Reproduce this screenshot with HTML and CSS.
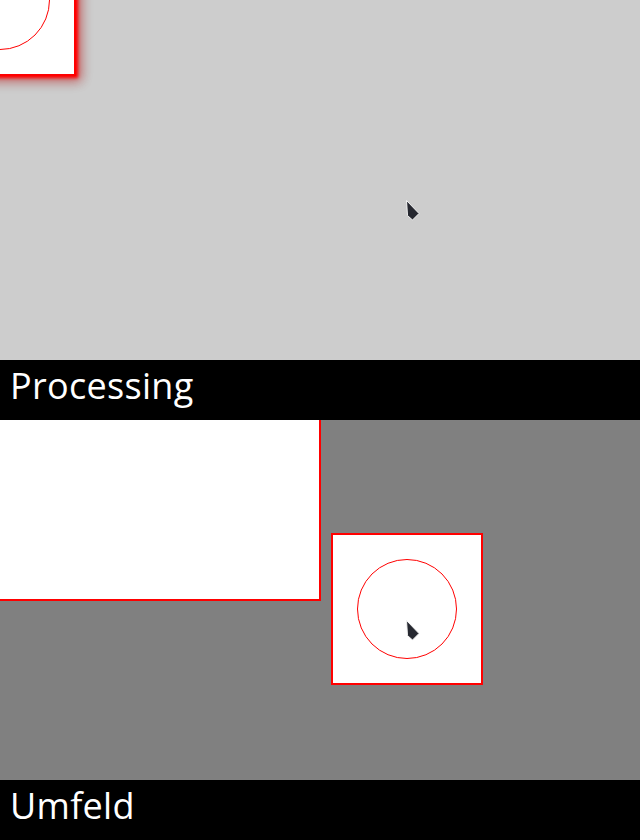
FILE: index.html
```html
<!DOCTYPE html>
<html>
<head>
<meta charset="utf-8">
<link rel="stylesheet" href="styles.css">
</head>
<body>
<section class="window">
  <div class="canvas canvas-light">
    <div class="square square-shadow square-corner">
      <div class="ring"></div>
    </div>
    <svg class="cursor cursor-top" width="18" height="26" viewBox="0 0 18 26">
      <polygon points="1.5,1.5 2.5,16.5 7.5,21 14,14.5" fill="#262830" stroke="#f4f4f4" stroke-width="1" stroke-linejoin="round"/>
    </svg>
  </div>
  <div class="label">Processing</div>
</section>
<section class="window">
  <div class="canvas canvas-dark">
    <div class="panel"></div>
    <div class="square square-mid">
      <div class="ring"></div>
    </div>
    <svg class="cursor cursor-bottom" width="18" height="26" viewBox="0 0 18 26">
      <polygon points="1.5,1.5 2.5,16.5 7.5,21 14,14.5" fill="#262830" stroke="#f4f4f4" stroke-width="1" stroke-linejoin="round"/>
    </svg>
  </div>
  <div class="label">Umfeld</div>
</section>
</body>
</html>
```
FILE: styles.css
```css
* { box-sizing: border-box; }
html, body {
  margin: 0;
  padding: 0;
  background: #000;
}
body {
  width: 640px;
  height: 840px;
  overflow: hidden;
  font-family: "Open Sans", "Noto Sans", sans-serif;
}
.window {
  display: flex;
  flex-direction: column;
}
.canvas {
  position: relative;
  height: 360px;
  overflow: hidden;
}
.canvas-light { background: #cdcdcd; }
.canvas-dark { background: #808080; }
.label {
  height: 60px;
  background: #000;
  color: #fff;
  font-size: 36px;
  letter-spacing: 0.3px;
  line-height: 52px;
  padding-left: 10px;
}
.square {
  position: absolute;
  width: 152px;
  height: 152px;
  background: #fff;
  border: 2px solid #ff0000;
}
.square-corner {
  left: -76px;
  top: -76px;
}
.square-shadow {
  box-shadow: 0 0 3px 2px #ff0000, 3px 3px 10px 2px rgba(255, 0, 0, 0.4), 5px 5px 12px rgba(0, 0, 0, 0.2);
}
.square-mid {
  left: 331px;
  top: 113px;
}
.ring {
  position: absolute;
  left: 24px;
  top: 24px;
  width: 100px;
  height: 100px;
  border: 1px solid #ff0000;
  border-radius: 50%;
}
.panel {
  position: absolute;
  left: -20px;
  top: -20px;
  width: 341px;
  height: 201px;
  background: #fff;
  border: 2px solid #ff0000;
}
.cursor {
  position: absolute;
}
.cursor-top {
  left: 405px;
  top: 199px;
}
.cursor-bottom {
  left: 405px;
  top: 199px;
}
```
